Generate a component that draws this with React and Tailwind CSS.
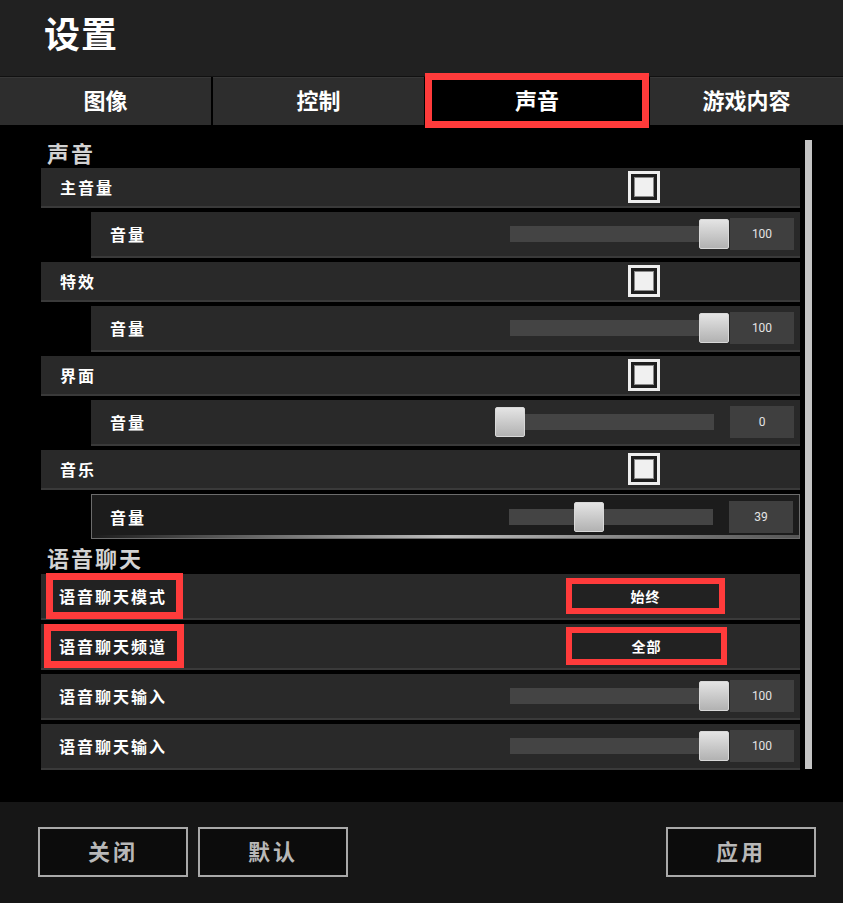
import React from 'react';

const font = { fontFamily: '"Noto Sans CJK SC", "Noto Sans", sans-serif' };

function Checkbox(){
  return (
    <div className="w-[32px] h-[32px] border-[3px] border-[#eeeeee] bg-[#1e1e1e] p-[3px]">
      <div className="w-full h-full bg-[#f0f0f0] border border-[#8a8a8a]"></div>
    </div>
  );
}

function Slider({ value }){
  return (
    <div className="flex items-center pr-[6px]">
      <div className="relative w-[204px] h-[16px] bg-[#444444]">
        <div
          className="absolute top-[-7px] w-[30px] h-[30px] rounded-[2px] border border-[#d8d8d8] bg-gradient-to-b from-[#e4e4e4] to-[#b2b2b2]"
          style={{ left: `calc(${value}% - 15px)` }}
        ></div>
      </div>
      <div className="ml-[16px] w-[64px] h-[32px] bg-[#3f3f3f] flex items-center justify-center text-[12px] text-[#e4e4e4]" style={{ fontFamily: 'Roboto, "Liberation Sans", sans-serif' }}>
        {value}
      </div>
    </div>
  );
}

function MainRow({ label }){
  return (
    <div className="h-[40px] mb-[4px] bg-[#292929] border-b-2 border-[#3a3a3a] flex items-center justify-between">
      <div className="pl-[19px] text-[16px] font-bold tracking-[2px] text-white">{label}</div>
      <div className="mr-[140px]"><Checkbox /></div>
    </div>
  );
}

function SubRow({ value, active }){
  if (active) {
    return (
      <div className="relative ml-[50px] h-[45px] bg-[#1c1c1c] border border-[#6c6c6c] flex items-center justify-between">
        <div className="pl-[18px] text-[16px] font-bold tracking-[2px] text-white">音量</div>
        <Slider value={value} />
        <div className="absolute left-0 right-0 bottom-0 h-[3px] bg-gradient-to-r from-transparent via-[#bdbdbd] to-[#555555]"></div>
      </div>
    );
  }
  return (
    <div className="ml-[50px] h-[46px] mb-[4px] bg-[#292929] border-b-2 border-[#3a3a3a] flex items-center justify-between">
      <div className="pl-[19px] text-[16px] font-bold tracking-[2px] text-white">音量</div>
      <Slider value={value} />
    </div>
  );
}

function Heading({ children, className }){
  return <div className={`pl-[6px] text-[22px] leading-[26px] font-semibold tracking-[2px] text-[#d2d2d2] ${className}`}>{children}</div>;
}

function SelectRow({ label, value, lbl, sel }){
  return (
    <div className="h-[46px] mb-[4px] bg-[#292929] border-b-2 border-[#3a3a3a] flex items-center justify-between">
      <div className={`flex items-center bg-[#222222] border-[7px] border-[#ff3b3b] text-[16px] font-bold tracking-[2px] text-white ${lbl}`}>{label}</div>
      <div className={`flex items-center justify-center bg-[#222222] border-[6px] border-[#ff3b3b] text-[14px] font-bold tracking-[1px] text-white ${sel}`}>{value}</div>
    </div>
  );
}

function InputRow({ label, value }){
  return (
    <div className="h-[46px] mb-[4px] bg-[#292929] border-b-2 border-[#3a3a3a] flex items-center justify-between">
      <div className="pl-[18px] text-[16px] font-bold tracking-[2px] text-white">{label}</div>
      <Slider value={value} />
    </div>
  );
}

function FootBtn({ children }){
  return (
    <button className="w-[150px] h-[50px] pb-[3px] bg-[#0c0c0c] border-2 border-[#a9a9a9] text-[22px] font-bold tracking-[3px] text-[#b8b8b8]">{children}</button>
  );
}

export default function App(){
  const tabs = ['图像','控制','声音','游戏内容'];
  return (
    <div className="w-[843px] h-[903px] bg-black flex flex-col overflow-hidden" style={font}>
      <div className="h-[77px] bg-[#212121] border-b border-[#111111] pl-[44px] pt-[10px]">
        <div className="text-[36px] leading-[44px] font-bold text-white tracking-[1px]">设置</div>
      </div>
      <div className="h-[48px] flex gap-[2px] bg-black">
        {tabs.map((t,i)=> (
          <div key={t} className={`relative flex items-center justify-center pb-[4px] text-[22px] font-bold text-white ${i===0?'w-[211px]':''} ${i===1?'w-[211px]':''} ${i===2?'w-[222px] bg-black':'bg-[#2d2d2d] border-t border-[#383838]'} ${i===3?'flex-1':''}`}>
            {t}
            {i===2 && <div className="absolute left-[-1px] right-[-1px] top-[-4px] bottom-[-3px] border-[7px] border-[#ff3b3b]"></div>}
          </div>
        ))}
      </div>
      <div className="h-[677px] flex pl-[41px]">
        <div className="w-[759px]">
          <Heading className="pt-[14px] pb-[3px]">声音</Heading>
          <MainRow label="主音量" />
          <SubRow value={100} />
          <MainRow label="特效" />
          <SubRow value={100} />
          <MainRow label="界面" />
          <SubRow value={0} />
          <MainRow label="音乐" />
          <SubRow value={39} active />
          <Heading className="pt-[5px] pb-[4px]">语音聊天</Heading>
          <SelectRow label="语音聊天模式" value="始终" lbl="ml-[5px] w-[137px] h-[46px] pl-[6px]" sel="w-[159px] h-[36px] mr-[75px]" />
          <SelectRow label="语音聊天频道" value="全部" lbl="ml-[3px] w-[140px] h-[44px] pl-[8px]" sel="w-[161px] h-[38px] mr-[73px]" />
          <InputRow label="语音聊天输入" value={100} />
          <InputRow label="语音聊天输入" value={100} />
        </div>
        <div className="ml-[5px] mt-[15px] w-[7px] h-[629px] bg-[#c4c4c4]"></div>
      </div>
      <div className="flex-1 bg-[#161616] flex items-start pt-[25px] px-[38px]">
        <div className="flex gap-[10px]">
          <FootBtn>关闭</FootBtn>
          <FootBtn>默认</FootBtn>
        </div>
        <div className="ml-auto mr-[-11px]"><FootBtn>应用</FootBtn></div>
      </div>
    </div>
  );
}
